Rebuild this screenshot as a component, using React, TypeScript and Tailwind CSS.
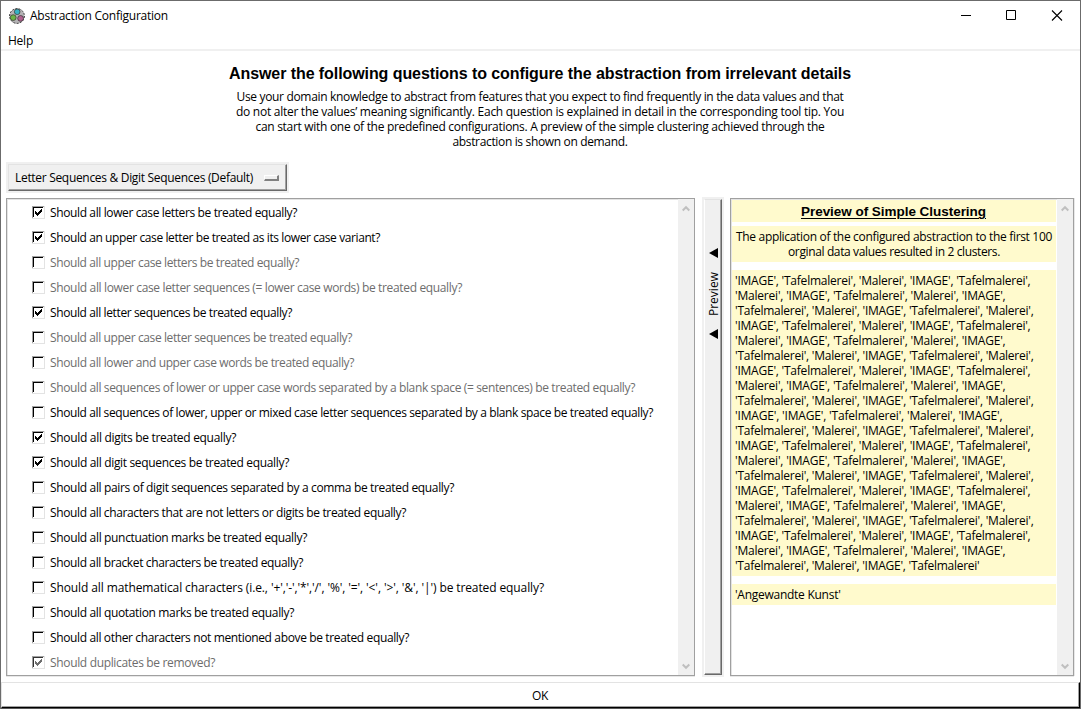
import { useLayoutEffect, useRef, useState } from "react";

type FitProps = { text: string; width: number; className?: string };

/** A single line of text whose tracking is adjusted so that it spans `width` pixels. */
function FitText({ text, width, className = "" }: FitProps) {
  const ref = useRef<HTMLSpanElement>(null);
  const [spacing, setSpacing] = useState(0);
  useLayoutEffect(() => {
    if (!ref.current) return;
    const natural = ref.current.getBoundingClientRect().width;
    setSpacing((s) => s + (width - natural) / text.length);
  }, [text, width]);
  return (
    <span ref={ref} className={`inline-block whitespace-pre ${className}`} style={{ letterSpacing: `${spacing}px` }}>
      {text}
    </span>
  );
}

type Question = { text: string; width: number; checked?: boolean; disabled?: boolean };

const questions: Question[] = [
  { text: "Should all lower case letters be treated equally?", width: 247, checked: true },
  { text: "Should an upper case letter be treated as its lower case variant?", width: 330, checked: true },
  { text: "Should all upper case letters be treated equally?", width: 249, disabled: true },
  { text: "Should all lower case letter sequences (= lower case words) be treated equally?", width: 412, disabled: true },
  { text: "Should all letter sequences be treated equally?", width: 242, checked: true },
  { text: "Should all upper case letter sequences be treated equally?", width: 302, disabled: true },
  { text: "Should all lower and upper case words be treated equally?", width: 304, disabled: true },
  { text: "Should all sequences of lower or upper case words separated by a blank space (= sentences) be treated equally?", width: 585, disabled: true },
  { text: "Should all sequences of lower, upper or mixed case letter sequences separated by a blank space be treated equally?", width: 603 },
  { text: "Should all digits be treated equally?", width: 186, checked: true },
  { text: "Should all digit sequences be treated equally?", width: 239, checked: true },
  { text: "Should all pairs of digit sequences separated by a comma be treated equally?", width: 404 },
  { text: "Should all characters that are not letters or digits be treated equally?", width: 356 },
  { text: "Should all punctuation marks be treated equally?", width: 257 },
  { text: "Should all bracket characters be treated equally?", width: 253 },
  { text: "Should all mathematical characters (i.e., '+','-','*','/', '%', '=', '<', '>', '&', '|') be treated equally?", width: 494 },
  { text: "Should all quotation marks be treated equally?", width: 244 },
  { text: "Should all other characters not mentioned above be treated equally?", width: 359 },
  { text: "Should duplicates be removed?", width: 165, checked: true, disabled: true },
];

const intro = [
  { text: "Use your domain knowledge to abstract from features that you expect to find frequently in the data values and that", width: 607 },
  { text: "do not alter the values’ meaning significantly. Each question is explained in detail in the corresponding tool tip. You", width: 608 },
  { text: "can start with one of the predefined configurations. A preview of the simple clustering achieved through the", width: 569 },
  { text: "abstraction is shown on demand.", width: 175 },
];

const lineA = { text: "'IMAGE', 'Tafelmalerei', 'Malerei', 'IMAGE', 'Tafelmalerei',", width: 295.5 };
const lineB = { text: "'Malerei', 'IMAGE', 'Tafelmalerei', 'Malerei', 'IMAGE',", width: 270.5 };
const lineC = { text: "'Tafelmalerei', 'Malerei', 'IMAGE', 'Tafelmalerei', 'Malerei',", width: 298.5 };
const lineD = { text: "'IMAGE', 'IMAGE', 'Tafelmalerei', 'Malerei', 'IMAGE',", width: 267.5 };
const lineE = { text: "'Tafelmalerei', 'Malerei', 'IMAGE', 'Tafelmalerei'", width: 244.5 };

const cluster = [
  lineA, lineB, lineC, lineA, lineB, lineC, lineA, lineB, lineC, lineD,
  lineC, lineA, lineB, lineC, lineA, lineB, lineC, lineA, lineB, lineE,
];

function AppIcon() {
  return (
    <svg width="16" height="16" viewBox="0 0 16 16">
      <circle cx="8" cy="8" r="7.4" fill="#b5b3b5" stroke="#333" strokeWidth="1" strokeDasharray="2 1.3" />
      <circle cx="8.2" cy="3.8" r="2.8" fill="#35b3c4" stroke="#333" strokeWidth=".7" />
      <circle cx="4.2" cy="9.6" r="2.9" fill="#6cb544" stroke="#333" strokeWidth=".7" />
      <circle cx="11.6" cy="10.4" r="2.9" fill="#b0618f" stroke="#333" strokeWidth=".7" />
    </svg>
  );
}

function CheckBox({ checked, disabled }: { checked?: boolean; disabled?: boolean }) {
  return (
    <svg width="13" height="13" viewBox="0 0 13 13" shapeRendering="crispEdges" className="shrink-0">
      <path d="M0 0H13V13H0z" fill="#e3e3e3" />
      <path d="M0 0H12V1H1V12H0z" fill="#a0a0a0" />
      <path d="M1 1H12V12H1z" fill="#fff" />
      <path d="M1 1H11V2H2V11H1z" fill={disabled && checked ? "#333" : "#000"} />
      {checked && (
        <path
          d="M3 5h1v1h1v1h1v-1h1v-1h1v-1h1v-1h1v3h-1v1h-1v1h-1v1h-1v1h-1v-1h-1v-1h-1z"
          fill={disabled ? "#6d6d6d" : "#000"}
        />
      )}
    </svg>
  );
}

function ScrollBar() {
  return (
    <div className="flex w-4 shrink-0 flex-col items-center justify-between bg-[#f0f0f0] pt-[6px] pr-px pb-[5px]">
      <svg width="8" height="7" viewBox="0 0 8 7" fill="none" stroke="#bfbfbf" strokeWidth="2">
        <path d="M.7 5.5L4 2.2L7.3 5.5" />
      </svg>
      <svg width="8" height="7" viewBox="0 0 8 7" fill="none" stroke="#bfbfbf" strokeWidth="2">
        <path d="M.7 1.5L4 4.8L7.3 1.5" />
      </svg>
    </div>
  );
}

function Arrow() {
  return (
    <svg width="9" height="10" viewBox="0 0 9 10" className="shrink-0">
      <path d="M0 5L9 0V10z" fill="#000" />
    </svg>
  );
}

export default function App() {
  return (
    <div className="flex h-[709px] w-[1081px] flex-col overflow-hidden border border-b-0 border-[#6b6b6b] bg-white font-['Open_Sans','Noto_Sans',sans-serif] text-[12px] leading-[15px] text-black">
      <header className="flex h-[29px] shrink-0 items-center pl-2">
        <AppIcon />
        <FitText text="Abstraction Configuration" width={138} className="ml-[5px]" />
        <div className="ml-auto flex items-center pr-[17px]">
          <svg width="102" height="11" viewBox="0 0 102 11" fill="none" stroke="#000">
            <path d="M0 5.5H10" />
            <path d="M45.5 .5h9v9h-9z" />
            <path d="M91 .5L101 10.5M101 .5L91 10.5" strokeWidth="1.1" />
          </svg>
        </div>
      </header>
      <nav className="flex h-[21px] shrink-0 items-center border-b-2 border-[#f0f0f0] pt-[2px] pl-[7px]">
        <FitText text="Help" width={25} />
      </nav>

      <section className="flex h-[111px] shrink-0 flex-col items-center pt-[13px] pr-px">
        <h1 className="mb-[6px] font-['Liberation_Sans',Arial,sans-serif] text-[16px] leading-[19px] font-bold">
          <FitText text="Answer the following questions to configure the abstraction from irrelevant details" width={622} />
        </h1>
        {intro.map((line) => (
          <div key={line.text} className="flex h-[15px] items-center">
            <FitText {...line} />
          </div>
        ))}
      </section>

      <div className="ml-[5px] flex h-[31px] w-[283px] shrink-0 border-2 border-[#f0f0f0]">
        <button className="flex w-full items-center justify-between border border-t-[#e3e3e3] border-r-[#696969] border-b-[#696969] border-l-[#e3e3e3] bg-[#f0f0f0] pr-[7px] pl-[6px] shadow-[inset_-1px_-1px_0_#a0a0a0]">
          <FitText text="Letter Sequences & Digit Sequences (Default)" width={238} />
          <span className="block h-[6px] w-[15px] border-t border-r-2 border-b-2 border-l border-t-white border-r-[#808080] border-b-[#808080] border-l-white bg-[#f0f0f0]" />
        </button>
      </div>

      <main className="mt-[4px] flex h-[480px] shrink-0 pl-[5px]">
        <section className="mt-px flex h-[478px] w-[689px] shrink-0 overflow-hidden border border-[#a0a0a0] shadow-[0_1px_0_#e8e8e8]">
          <div className="flex min-w-0 flex-1 flex-col border-t border-l border-[#e3e3e3] pl-[24px]">
            {questions.map((q) => (
              <label key={q.text} className={`flex h-[25px] shrink-0 items-center gap-[5px] ${q.disabled ? "text-[#6d6d6d]" : ""}`}>
                <CheckBox checked={q.checked} disabled={q.disabled} />
                <FitText text={q.text} width={q.width} />
              </label>
            ))}
          </div>
          <ScrollBar />
        </section>

        <div className="ml-[7px] flex w-[22px] shrink-0 border-2 border-[#f0f0f0]">
          <button className="flex w-full flex-col items-center justify-start border border-t-[#e3e3e3] border-r-[#696969] border-b-[#696969] border-l-white bg-[#f0f0f0] pt-[48px] pl-px shadow-[inset_-1px_-1px_0_#a0a0a0]">
            <Arrow />
            <span className="mt-[15px] mb-[13px] flex h-[43px] w-[15px] shrink-0 rotate-180 items-center justify-center [writing-mode:vertical-rl]">
              Preview
            </span>
            <Arrow />
          </button>
        </div>

        <section className="mt-px ml-[6px] flex h-[478px] w-[344px] shrink-0 overflow-hidden border border-[#a0a0a0] shadow-[0_1px_0_#e8e8e8,1px_0_0_#e8e8e8]">
          <div className="flex min-w-0 flex-1 flex-col border-t border-l border-[#e3e3e3] pr-px">
            <h2 className="flex h-[22px] shrink-0 items-center justify-center bg-[#fffacd] pt-px pr-px font-['Liberation_Sans',Arial,sans-serif] text-[13.5px] font-bold">
              <FitText
                text="Preview of Simple Clustering"
                width={185}
                className="underline decoration-1 underline-offset-2"
              />
            </h2>
            <div className="mt-1 flex h-[36px] shrink-0 flex-col items-center bg-[#fffacd] pt-[3px]">
              <FitText text="The application of the configured abstraction to the first 100" width={316} />
              <FitText text="orginal data values resulted in 2 clusters." width={212} />
            </div>
            <div className="mt-2 flex h-[306px] shrink-0 flex-col items-start bg-[#fffacd] pt-[3px] pl-[3px]">
              {cluster.map((line, i) => (
                <FitText key={i} {...line} />
              ))}
            </div>
            <div className="mt-2 flex h-[21px] shrink-0 items-center bg-[#fffacd] pl-[3px]">
              <FitText text="'Angewandte Kunst'" width={105.5} />
            </div>
          </div>
          <ScrollBar />
        </section>
      </main>

      <button className="mt-[5px] flex h-[26px] shrink-0 items-center justify-center border border-t-[#e3e3e3] border-r-black border-b-black border-l-[#e3e3e3] pr-px shadow-[inset_-1px_-1px_0_#a0a0a0]">
        <FitText text="OK" width={16} />
      </button>
      <div className="-mr-px -ml-px h-px shrink-0 bg-[#555555]" />
    </div>
  );
}
